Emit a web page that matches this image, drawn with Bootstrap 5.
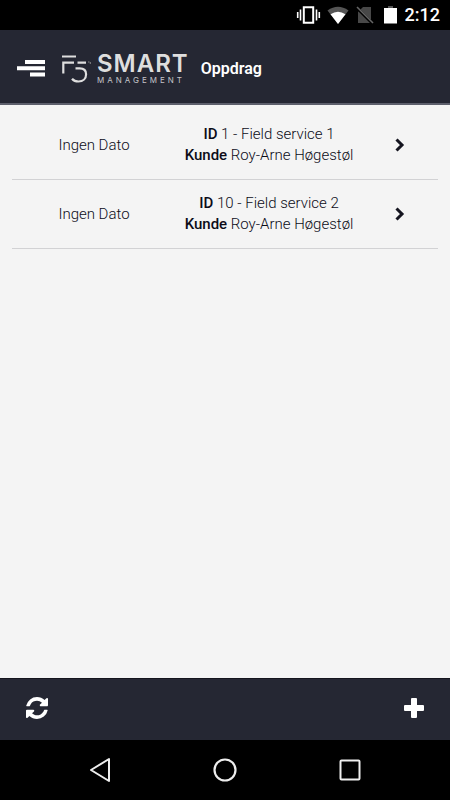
<!DOCTYPE html>
<html lang="no">
<head>
<meta charset="utf-8">
<meta name="viewport" content="width=device-width, initial-scale=1">
<title>Oppdrag</title>
<link href="https://cdn.jsdelivr.net/npm/bootstrap@5.3.0/dist/css/bootstrap.min.css" rel="stylesheet">
<style>
body { font-family: Roboto, "Liberation Sans", sans-serif; background: #f4f4f4; color: #0c0c18; }
.status-bar { height: 30px; background: #000; color: #fff; font-size: 18px; line-height: 30px; font-weight: 500; padding-right: 10px; }
.app-header { height: 75px; background: #252733; border-bottom: 2px solid #5d5f6c; padding: 4px 17px 0; }
.brand-name { font-family: Inter, "Liberation Sans", sans-serif; color: #dedede; }
.brand-top { font-size: 24px; line-height: 22px; font-weight: 600; letter-spacing: 1px; }
.brand-sub { font-size: 8px; line-height: 10px; letter-spacing: 3px; color: #c4c4c9; }
.page-title { font-size: 16px; line-height: 22px; font-weight: 600; color: #fff; padding-left: 12px; }
.job { display: grid; grid-template-columns: 82fr 93fr 38fr; align-items: center; color: inherit; font-size: 15px; line-height: 21px; font-weight: 300; height: 69px; border-bottom: 1px solid #d2d2d4; }
.job strong { font-weight: 500; }
.jobs { padding-top: 6px; }
.app-footer { height: 62px; background: #252733; border-top: 1px solid #14151d; padding: 0 25px 3px; }
.nav-keys { height: 60px; background: #000; padding: 0 87px; }
svg { display: block; }
</style>
</head>
<body class="min-vh-100 d-flex flex-column">
<div class="status-bar d-flex align-items-center justify-content-end">
  <svg width="109" height="22" viewBox="0 0 109 22" aria-hidden="true">
    <path d="M7.800 3.200h9.400v15.600H7.800z" fill="none" stroke="#fff" stroke-width="2"/>
    <path d="M4.500 5.500v11M1.700 8v6M20.500 5.500v11M23.300 8v6" stroke="#fff" stroke-width="1.600"/>
    <path d="M42 20 31.500 6.500Q42-1 52.500 6.500Z" fill="#555"/>
    <path d="M42 20 34.500 10.300Q42 5 49.500 10.300Z" fill="#fff"/>
    <path d="M67 3h8v16H62V8z" fill="#484848"/>
    <path d="m61 4 16 16" stroke="#000" stroke-width="3"/>
    <path d="m61 3 16 16" stroke="#666" stroke-width="1.600"/>
    <path d="M92 2h5v3h-5z" fill="#555"/>
    <path d="M88 4h13v15.500H88z" fill="#fff"/>
  </svg>
  <span>2:12</span>
</div>
<header class="app-header d-flex align-items-center">
  <button type="button" class="btn p-0 border-0" aria-label="Meny">
    <svg width="28" height="17" viewBox="0 0 28 17" fill="#fff"><path d="M8 0h20v4H8zM0 6.300h28v4H0zM13 12.600h15v4H13z"/></svg>
  </button>
  <a href="#" class="d-flex align-items-center text-decoration-none ms-3" aria-label="F5 Smart Management">
    <svg width="36" height="30" viewBox="0 0 36 30" fill="none" stroke="#dedede" stroke-width="2.200">
      <path d="M1 2.500h14M2.300 19.500V8.700H13M16.500 8.700h8.500"/>
      <path d="M14.500 14.300h4.200c4.300 0 6.400 2.500 6.400 5.900 0 4.300-3.100 7.300-7.600 7.300-2.800 0-5-1-6.500-2.800"/>
      <path d="M27 8h1.500M29.300 10V8" stroke="#888" stroke-width="1"/>
    </svg>
    <span class="brand-name d-flex flex-column">
      <span class="brand-top">SMART</span>
      <span class="brand-sub">MANAGEMENT</span>
    </span>
  </a>
  <h1 class="page-title mb-0">Oppdrag</h1>
</header>
<main class="jobs flex-grow-1 mx-2 px-1">
  <a href="#" class="job text-decoration-none text-center">
    <span>Ingen Dato</span>
    <span><strong>ID</strong> 1 - Field service 1<br><strong>Kunde</strong> Roy-Arne Høgestøl</span>
    <svg class="mx-auto" width="10" height="14" viewBox="0 0 10 14" fill="none" stroke="#14141f" stroke-width="3"><path d="m1.500 1.500 5.500 5.500-5.500 5.500"/></svg>
  </a>
  <a href="#" class="job text-decoration-none text-center">
    <span>Ingen Dato</span>
    <span><strong>ID</strong> 10 - Field service 2<br><strong>Kunde</strong> Roy-Arne Høgestøl</span>
    <svg class="mx-auto" width="10" height="14" viewBox="0 0 10 14" fill="none" stroke="#14141f" stroke-width="3"><path d="m1.500 1.500 5.500 5.500-5.500 5.500"/></svg>
  </a>
</main>
<footer class="app-footer d-flex align-items-center justify-content-between">
  <button type="button" class="btn p-0 border-0" aria-label="Oppdater">
    <svg width="24" height="22" viewBox="0 0 1536 1536" fill="#fff"><path d="M1511 928q0 5-1 7-64 268-268 434.500T764 1536q-146 0-282.500-55T238 1324l-129 129q-19 19-45 19t-45-19-19-45V960q0-26 19-45t45-19h448q26 0 45 19t19 45-19 45l-137 137q71 66 161 102t187 36q134 0 250-65t186-179q11-17 53-117 8-23 30-23h192q13 0 22.500 9.500t9.500 22.500zm25-800v448q0 26-19 45t-45 19h-448q-26 0-45-19t-19-45 19-45l138-138Q969 256 768 256q-134 0-250 65T332 500q-11 17-53 117-8 23-30 23H50q-13 0-22.500-9.500T18 608v-7q65-268 270-434.500T768 0q146 0 284 55.500T1297 212l130-129q19-19 45-19t45 19 19 45z"/></svg>
  </button>
  <button type="button" class="btn p-0 border-0" aria-label="Legg til">
    <svg width="22" height="22" viewBox="0 0 22 22" fill="#fff"><path d="M9 1h4q1 0 1 1v6h6q1 0 1 1v4q0 1-1 1h-6v6q0 1-1 1H9q-1 0-1-1v-6H2q-1 0-1-1V9q0-1 1-1h6V2q0-1 1-1Z"/></svg>
  </button>
</footer>
<nav class="nav-keys d-flex align-items-center justify-content-between" aria-label="System">
  <button type="button" class="btn p-0 border-0" aria-label="Tilbake"><svg width="26" height="26" viewBox="0 0 26 26" fill="none" stroke="#eee" stroke-width="2" stroke-linejoin="round"><path d="M4 13 22 2v22z"/></svg></button>
  <button type="button" class="btn p-0 border-0" aria-label="Hjem"><svg width="26" height="26" viewBox="0 0 26 26" fill="none" stroke="#eee" stroke-width="2.200"><circle cx="13" cy="13" r="10.500"/></svg></button>
  <button type="button" class="btn p-0 border-0" aria-label="Oversikt"><svg width="26" height="26" viewBox="0 0 26 26" fill="none" stroke="#eee" stroke-width="2"><rect x="3.500" y="3.500" width="19" height="19" rx="1"/></svg></button>
</nav>
<script src="https://cdn.jsdelivr.net/npm/bootstrap@5.3.0/dist/js/bootstrap.bundle.min.js"></script>
</body>
</html>
